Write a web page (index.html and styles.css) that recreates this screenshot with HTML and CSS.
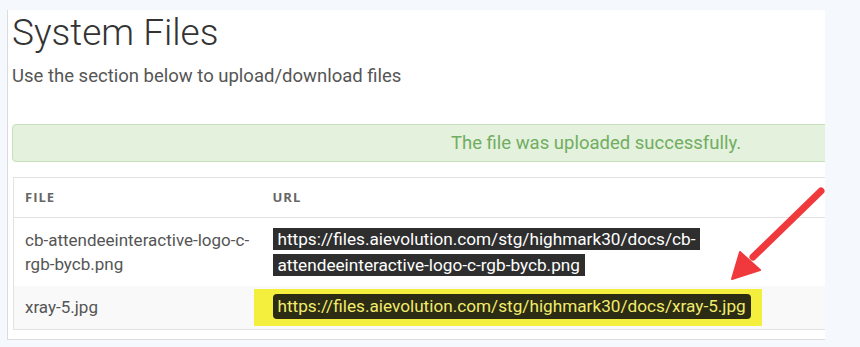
FILE: index.html
```html
<!DOCTYPE html>
<html lang="en">
<head>
  <meta charset="UTF-8">
  <meta name="viewport" content="width=device-width,initial-scale=1.0">
  <title>System Files</title>
  <link rel="stylesheet" href="styles.css">
</head>
<body>

  <!-- Panel with the uploaded files -->
  <main class="panel">
    <h1 class="title">System Files</h1>
    <p class="lead">Use the section below to upload/download files</p>

    <div class="alert">The file was uploaded successfully.</div>

    <table class="files">
      <thead>
        <tr>
          <th class="col-file">File</th>
          <th>URL</th>
        </tr>
      </thead>
      <tbody>
        <tr>
          <td class="col-file">cb-attendeeinteractive-logo-c-<br>rgb-bycb.png</td>
          <td><span class="url">https://files.aievolution.com/stg/highmark30/docs/cb-<br>attendeeinteractive-logo-c-rgb-bycb.png</span></td>
        </tr>
        <tr class="alt">
          <td class="col-file">xray-5.jpg</td>
          <td><span class="marker"><span class="url url-marked">https://files.aievolution.com/stg/highmark30/docs/xray-5.jpg</span></span></td>
        </tr>
      </tbody>
    </table>

    <!-- Annotation arrow -->
    <svg class="arrow" width="110" height="110" viewBox="0 0 110 110">
      <line x1="98" y1="10" x2="30" y2="76" stroke="#f0393c" stroke-width="7" stroke-linecap="round"/>
      <polygon points="9,98 17,71 37,89" fill="#f0393c" stroke="#f0393c" stroke-width="2" stroke-linejoin="round"/>
    </svg>
  </main>

</body>
</html>
```

FILE: styles.css
```css
* {
  margin: 0;
  padding: 0;
  box-sizing: border-box;
}

body {
  font-family: Roboto, "Open Sans", Arial, sans-serif;
  background-color: #f5f9fe;
  color: #555;
  overflow: hidden;
}

.panel {
  position: relative;
  margin: 10px 0 0 7px;
  width: 818px;
  height: 330px;
  padding: 3px 0 0 4px;
  background: #fff;
  border-left: 1px solid #dcdcdc;
  border-bottom: 1px solid #dcdcdc;
  overflow: hidden;
}

.title {
  font-size: 37px;
  font-weight: 300;
  line-height: 40px;
  color: #333;
}

.lead {
  margin-top: 10px;
  font-size: 18.5px;
  line-height: 26px;
  color: #555;
}

.alert {
  margin-top: 35px;
  width: 1168px;
  height: 38px;
  line-height: 36px;
  text-align: center;
  font-size: 18.5px;
  color: #71ad61;
  background: #e4f1dd;
  border: 1px solid #c6e0bb;
  border-radius: 4px;
}

.files {
  margin: 15px 0 0 1px;
  width: 1168px;
  border-collapse: collapse;
  border: 1px solid #e2e2e2;
  table-layout: fixed;
}

.files th {
  height: 40px;
  padding: 0 11px 2px;
  text-align: left;
  font-family: "Open Sans", Arial, sans-serif;
  font-size: 13px;
  font-weight: 700;
  letter-spacing: 1px;
  text-transform: uppercase;
  color: #666;
  border-bottom: 1px solid #e2e2e2;
}

.files .col-file {
  width: 248px;
}

.files td {
  padding: 0 11px;
  font-size: 17px;
  line-height: 24px;
  color: #555;
  vertical-align: middle;
}

.files tbody tr {
  height: 68px;
}

.files tbody tr.alt {
  height: 44px;
  background: #f9f9f9;
}

.url {
  padding: 1px 5px;
  font-size: 17.2px;
  line-height: 26px;
  background: #2e2e2e;
  color: #fff;
  -webkit-box-decoration-break: clone;
  box-decoration-break: clone;
}

/* Yellow highlighter over the second link */
.marker {
  display: inline-block;
  margin-left: -19px;
  padding: 5px 11px 7px 19px;
  background: #f4ef3c;
}

.url-marked {
  display: inline-block;
  padding: 0 5px;
  line-height: 25px;
  border-radius: 4px;
  background: #2c2b14;
  color: #f2ec6c;
}

.arrow {
  position: absolute;
  left: 715px;
  top: 171px;
}
```
